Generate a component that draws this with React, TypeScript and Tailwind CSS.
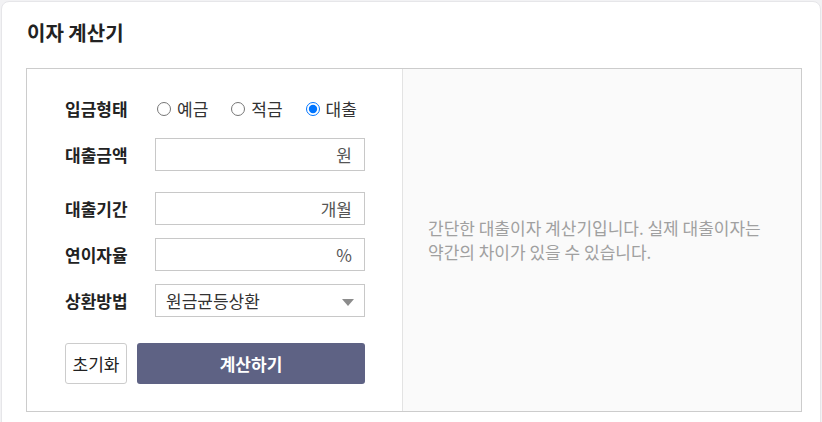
import { useState } from 'react'

const font = "font-['Noto_Sans_CJK_KR',sans-serif]"

const Field = ({ label, unit }: { label: string; unit: string }) => {
  return (
    <div className="flex items-center">
      <span className="w-[90px] text-[17px] font-bold text-[#222]">{label}</span>
      <input
        className="h-[33px] w-[210px] border border-[#c8c8c8] bg-white px-3 text-right text-[17px] text-[#555] outline-none placeholder:text-[#555]"
        placeholder={unit}
      />
    </div>
  )
}

export default function App() {
  const [type, setType] = useState('loan')
  const options = [
    { id: 'deposit', label: '예금' },
    { id: 'savings', label: '적금' },
    { id: 'loan', label: '대출' },
  ]
  return (
    <div className={`min-h-[422px] w-[822px] overflow-hidden bg-[#f2f2f4] pl-px pt-px ${font}`}>
      <div className="h-[440px] w-[820px] rounded-t-lg border border-[#e6e6e9] bg-white px-[24px] pt-[17px]">
        <h2 className="pl-px text-[20px] font-bold leading-[28px] text-[#222]">이자 계산기</h2>
        <div className="mt-[21px] flex h-[344px] w-[776px] border border-[#cccccc]">
          <div className="w-[375px] pl-[38px] pt-[23px]">
            <div className="flex h-[33px] items-center">
              <span className="w-[90px] text-[17px] font-bold text-[#222]">입금형태</span>
              <div className="flex items-center gap-[21px]">
                {options.map((o) => (
                  <label key={o.id} className="flex items-center gap-[6px] text-[17px] text-[#333]">
                    <input
                      type="radio"
                      name="type"
                      className="m-0 ml-[2px] h-[14px] w-[14px]"
                      checked={type === o.id}
                      onChange={() => setType(o.id)}
                    />
                    {o.label}
                  </label>
                ))}
              </div>
            </div>
            <div className="mt-[13px]">
              <Field label="대출금액" unit="원" />
            </div>
            <div className="mt-[21px]">
              <Field label="대출기간" unit="개월" />
            </div>
            <div className="mt-[13px]">
              <Field label="연이자율" unit="%" />
            </div>
            <div className="mt-[13px] flex items-center">
              <span className="w-[90px] text-[17px] font-bold text-[#222]">상환방법</span>
              <div className="relative h-[33px] w-[210px] border border-[#c8c8c8] bg-white">
                <span className="absolute left-[10px] top-1/2 -translate-y-1/2 text-[17px] text-[#333]">
                  원금균등상환
                </span>
                <svg className="absolute right-[10px] top-[14px]" width="12" height="7" viewBox="0 0 12 7">
                  <path d="M0 0h12L6 7z" fill="#8c8c8c" />
                </svg>
              </div>
            </div>
            <div className="mt-[26px] flex gap-[10px]">
              <button className="h-[41px] w-[62px] rounded-[3px] border border-[#cccccc] bg-white text-[17px] text-[#222]">
                초기화
              </button>
              <button className="h-[41px] w-[228px] rounded-[3px] bg-[#5e6284] text-[17px] font-bold text-white">
                계산하기
              </button>
            </div>
          </div>
          <div className="flex flex-1 items-center border-l border-[#e3e3e3] bg-[#fafafa] pl-[25px]">
            <p className="text-[17px] leading-[24px] text-[#a0a0a0]">
              간단한 대출이자 계산기입니다. 실제 대출이자는
              <br />
              약간의 차이가 있을 수 있습니다.
            </p>
          </div>
        </div>
      </div>
    </div>
  )
}
